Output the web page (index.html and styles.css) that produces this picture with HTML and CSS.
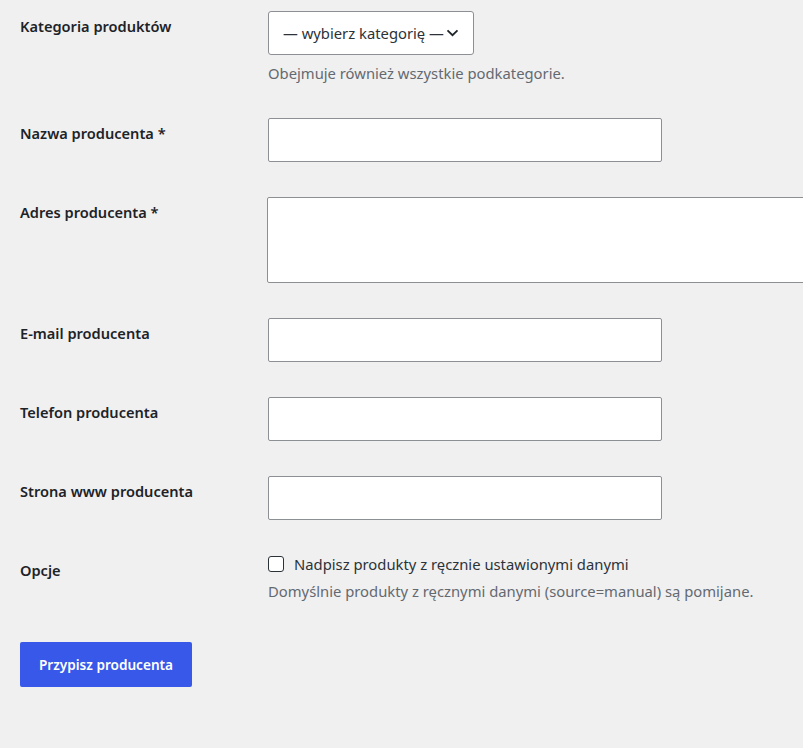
FILE: index.html
```html
<!DOCTYPE html>
<html lang="pl">
<head>
<meta charset="utf-8">
<title>Przypisz producenta</title>
<link rel="stylesheet" href="styles.css">
</head>
<body>
<form class="form">
  <div class="row">
    <div class="th"><label>Kategoria produktów</label></div>
    <div class="td">
      <div class="select">
        <span>— wybierz kategorię —</span>
        <svg class="chev" width="13" height="8" viewBox="0 0 13 8"><path d="M1.5 1.4 L6.5 6.2 L11.5 1.4" fill="none" stroke="#1d2327" stroke-width="1.8"/></svg>
      </div>
      <p class="desc">Obejmuje również wszystkie podkategorie.</p>
    </div>
  </div>
  <div class="row">
    <div class="th"><label>Nazwa producenta *</label></div>
    <div class="td"><input class="text" type="text"></div>
  </div>
  <div class="row">
    <div class="th"><label>Adres producenta *</label></div>
    <div class="td clip"><textarea class="area"></textarea></div>
  </div>
  <div class="row">
    <div class="th"><label>E-mail producenta</label></div>
    <div class="td"><input class="text" type="text"></div>
  </div>
  <div class="row">
    <div class="th"><label>Telefon producenta</label></div>
    <div class="td"><input class="text" type="text"></div>
  </div>
  <div class="row">
    <div class="th"><label>Strona www producenta</label></div>
    <div class="td"><input class="text" type="text"></div>
  </div>
  <div class="row">
    <div class="th"><label>Opcje</label></div>
    <div class="td">
      <label class="check"><span class="box"></span>Nadpisz produkty z ręcznie ustawionymi danymi</label>
      <p class="desc">Domyślnie produkty z ręcznymi danymi (source=manual) są pomijane.</p>
    </div>
  </div>
  <div class="actions">
    <button type="button" class="btn">Przypisz producenta</button>
  </div>
</form>
</body>
</html>
```
FILE: styles.css
```css
html, body {
  margin: 0;
  padding: 0;
  background: #f0f0f1;
  overflow: hidden;
}
body {
  font-family: "Noto Sans", "Open Sans", sans-serif;
  font-size: 14.8px;
  color: #1d2327;
  width: 803px;
  height: 748px;
}
.form {
  padding-left: 20px;
}
.row {
  display: flex;
  padding: 17px 0 18px;
}
.row:first-child {
  padding-top: 11px;
}
.th {
  width: 247px;
  flex: none;
  padding-top: 6px;
  font-weight: 600;
  font-size: 14.6px;
  line-height: 18px;
}
.td {
  flex: 1;
  min-width: 0;
}
.clip {
  overflow: hidden;
}
.select {
  margin-left: 1px;
  box-sizing: border-box;
  width: 206px;
  height: 44px;
  background: #fff;
  border: 1px solid #8c8f94;
  border-radius: 3px;
  display: flex;
  align-items: center;
  padding: 0 12px 0 14px;
  gap: 2px;
  white-space: nowrap;
  color: #2c3338;
}
.chev {
  flex: none;
}
.desc {
  margin: 8px 0 0 1px;
  line-height: 20px;
  color: #646970;
}
.text {
  display: block;
  margin: 0 0 0 1px;
  box-sizing: border-box;
  width: 394px;
  height: 44px;
  border: 1px solid #8c8f94;
  border-radius: 2px;
  background: #fff;
  font: inherit;
  padding: 0 8px;
}
.area {
  display: block;
  margin: 0;
  box-sizing: border-box;
  width: 600px;
  height: 86px;
  border: 1px solid #8c8f94;
  border-radius: 2px;
  background: #fff;
  font: inherit;
  resize: none;
}
.check {
  display: flex;
  align-items: center;
  margin-left: 1px;
  line-height: 18px;
  height: 18px;
  color: #2c3338;
}
.box {
  width: 16px;
  height: 16px;
  box-sizing: border-box;
  border: 1px solid #2c3338;
  border-radius: 3px;
  background: #fff;
  margin-right: 10px;
  flex: none;
}
.actions {
  padding-top: 23px;
}
.btn {
  width: 172px;
  height: 45px;
  background: #3858e9;
  color: #fff;
  border: 0;
  border-radius: 2px;
  font-family: inherit;
  font-size: 13.6px;
  font-weight: 600;
  padding: 0;
}
```
